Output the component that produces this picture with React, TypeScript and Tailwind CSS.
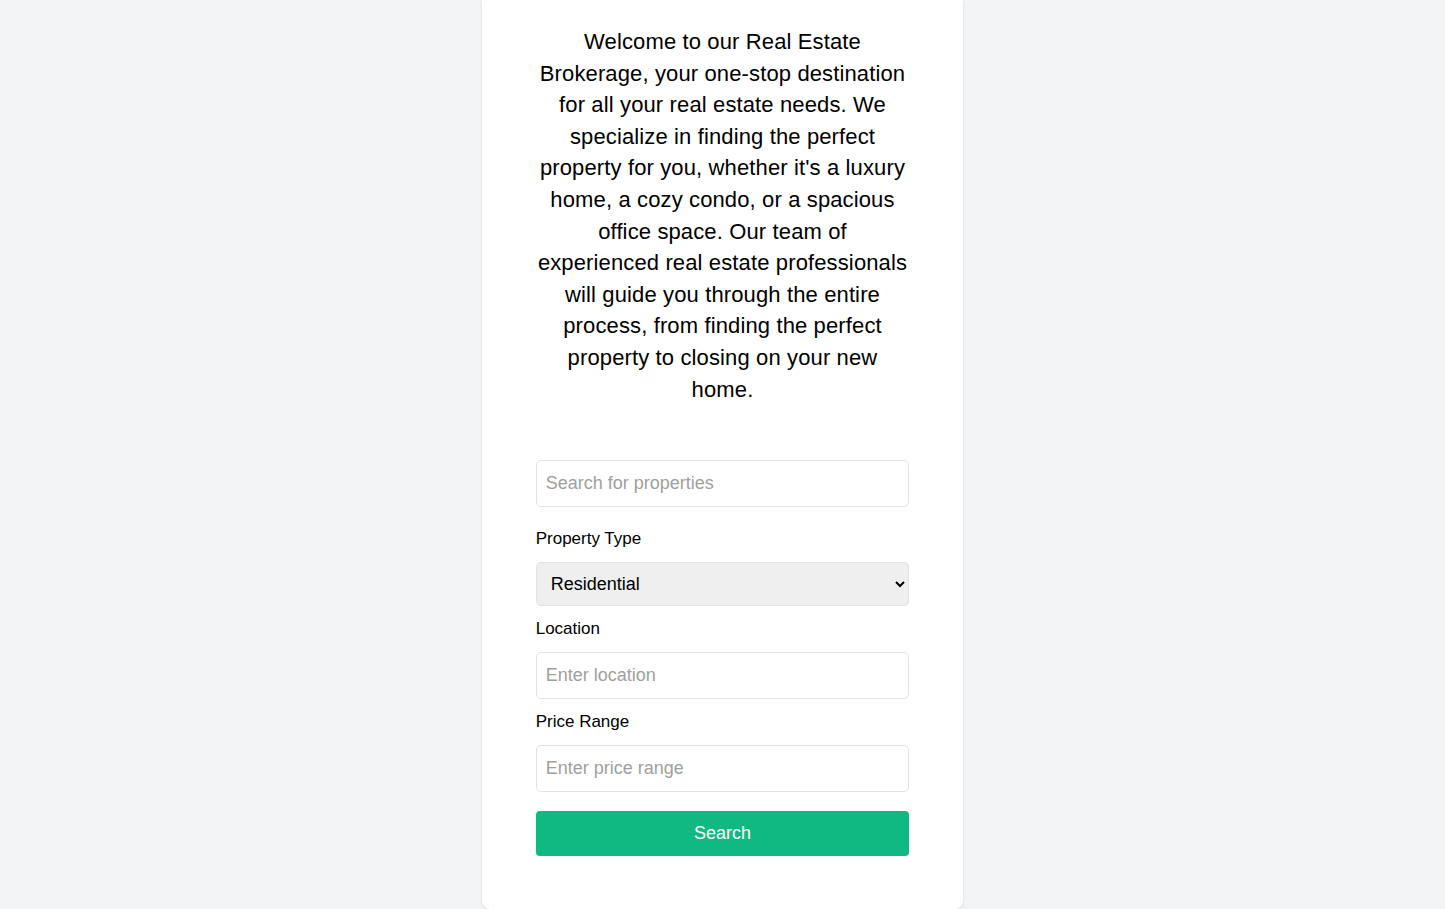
export default function App() {
  return (
    <div
      className="min-h-screen bg-[#f3f4f6] flex justify-center"
      style={{ fontFamily: '"Liberation Sans", Arial, sans-serif' }}
    >
      <div className="w-1/3 bg-white rounded-b-lg shadow-sm px-[54px] pt-[26px] pb-[53px] h-fit">
        <p className="text-[22px] leading-[31.6px] tracking-[0.13px] text-black text-center mb-[55px]">
          Welcome to our Real Estate Brokerage, your one-stop destination for all your real estate
          needs. We specialize in finding the perfect property for you, whether it's a luxury home,
          a cozy condo, or a spacious office space. Our team of experienced real estate
          professionals will guide you through the entire process, from finding the perfect
          property to closing on your new home.
        </p>

        <input
          type="text"
          placeholder="Search for properties"
          className="block w-full h-[47px] px-[9px] border border-[#e2e2e2] rounded-[5px] text-[18px] text-black placeholder:text-[#a0a0a0] mb-[18px]"
        />

        <label className="block text-[17px] leading-[27px] text-black mb-[10px]">Property Type</label>
        <select className="block w-full h-[44px] pl-[10px] pr-[6px] bg-[#efefef] border border-[#e2e2e2] rounded-[5px] text-[18px] text-black mb-[9px]">
          <option>Residential</option>
          <option>Commercial</option>
          <option>Land</option>
        </select>

        <label className="block text-[17px] leading-[27px] text-black mb-[10px]">Location</label>
        <input
          type="text"
          placeholder="Enter location"
          className="block w-full h-[47px] px-[9px] border border-[#e2e2e2] rounded-[5px] text-[18px] text-black placeholder:text-[#a0a0a0] mb-[9px]"
        />

        <label className="block text-[17px] leading-[27px] text-black mb-[10px]">Price Range</label>
        <input
          type="text"
          placeholder="Enter price range"
          className="block w-full h-[47px] px-[9px] border border-[#e2e2e2] rounded-[5px] text-[18px] text-black placeholder:text-[#a0a0a0] mb-[19px]"
        />

        <button className="block w-full h-[45px] bg-[#10b981] rounded text-white text-[18px]">
          Search
        </button>
      </div>
    </div>
  )
}
